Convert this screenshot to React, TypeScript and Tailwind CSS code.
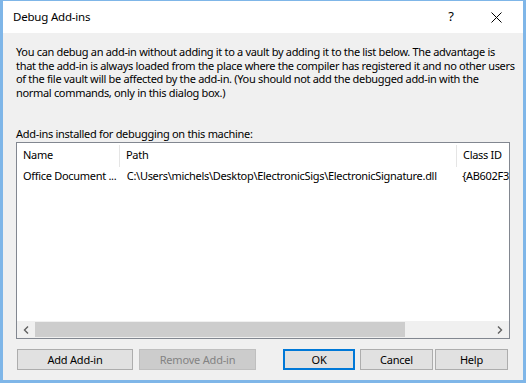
import { FC } from 'react';

const lines = [
    'You can debug an add-in without adding it to a vault by adding it to the list below. The advantage is',
    'that the add-in is always loaded from the place where the compiler has registered it and no other users',
    'of the file vault will be affected by the add-in. (You should not add the debugged add-in with the',
    'normal commands, only in this dialog box.)',
];

const Button: FC<{ label: string; className?: string }> = ({ label, className }) => (
    <button className={`h-[21px] flex items-center justify-center text-[11px] tracking-[-0.2px] leading-none ${className}`}>{label}</button>
);

const App: FC = () => {
    return (
        <div
            className='w-[526px] h-[383px] flex flex-col border-[3px] border-t border-[#7fb6e8] bg-[#f0f0f0] text-black overflow-hidden'
            style={{ fontFamily: '"Noto Sans", "Open Sans", sans-serif' }}
        >
            {/* title bar */}
            <div className='h-[32px] bg-white flex items-center pl-[10px] shrink-0'>
                <span className='text-[11.5px] tracking-[-0.2px] flex-1'>Debug Add-ins</span>
                <span className='text-[13px] w-[20px] text-center mr-[30px]'>?</span>
                <svg width='11' height='11' viewBox='0 0 11 11' className='mr-[21px]'>
                    <path d='M0.5 0.5 L10.5 10.5 M10.5 0.5 L0.5 10.5' stroke='#000' strokeWidth='1' />
                </svg>
            </div>

            <div className='flex-1 flex flex-col pl-[13px] pr-[14px] pt-[12px]'>
                <div className='text-[11px] tracking-[-0.32px] leading-[13.5px]'>
                    {lines.map((l, i) => (
                        <div key={i} className='whitespace-nowrap'>{l}</div>
                    ))}
                </div>
                <div className='text-[11px] tracking-[-0.3px] leading-[13px] mt-[28px] whitespace-nowrap'>Add-ins installed for debugging on this machine:</div>

                {/* list view */}
                <div className='mt-[2px] w-[494px] h-[197px] border border-[#828790] bg-white flex flex-col overflow-hidden text-[11px] tracking-[-0.3px]'>
                    <div className='h-[25px] flex items-center shrink-0'>
                        <div className='w-[103px] pl-[6px] h-[22px] flex items-center border-r border-[#e5e5e5]'>Name</div>
                        <div className='w-[337px] pl-[6px] h-[22px] flex items-center border-r border-[#e5e5e5]'>Path</div>
                        <div className='pl-[6px] whitespace-nowrap'>Class ID</div>
                    </div>
                    <div className='h-[17px] flex items-center shrink-0 whitespace-nowrap'>
                        <div className='w-[103px] pl-[6px] overflow-hidden'>Office Document ...</div>
                        <div className='w-[337px] pl-[7px] overflow-hidden'>C:\Users\michels\Desktop\ElectronicSigs\ElectronicSignature.dll</div>
                        <div className='pl-[6px]'>{'{AB602F3'}</div>
                    </div>
                    <div className='flex-1' />
                    {/* horizontal scrollbar */}
                    <div className='h-[17px] bg-[#f0f0f0] flex items-center shrink-0'>
                        <div className='w-[18px] h-full flex items-center justify-center'>
                            <svg width='6' height='8' viewBox='0 0 6 8'>
                                <path d='M5 0.5 L1.5 4 L5 7.5' stroke='#606060' strokeWidth='1.4' fill='none' />
                            </svg>
                        </div>
                        <div className='w-[370px] h-[15px] bg-[#cdcdcd]' />
                        <div className='flex-1' />
                        <div className='w-[18px] h-full flex items-center justify-center'>
                            <svg width='6' height='8' viewBox='0 0 6 8'>
                                <path d='M1 0.5 L4.5 4 L1 7.5' stroke='#606060' strokeWidth='1.4' fill='none' />
                            </svg>
                        </div>
                    </div>
                </div>

                {/* buttons */}
                <div className='mt-[10px] flex items-center'>
                    <Button label='Add Add-in' className='w-[116px] ml-[1px] bg-[#e1e1e1] border border-[#adadad]' />
                    <Button label='Remove Add-in' className='w-[117px] ml-[6px] bg-[#cccccc] border border-[#bfbfbf] text-[#838383]' />
                    <Button label='OK' className='w-[72px] ml-[27px] bg-[#e1e1e1] border-2 border-[#0078d7]' />
                    <Button label='Cancel' className='w-[73px] ml-[5px] bg-[#e1e1e1] border border-[#adadad]' />
                    <Button label='Help' className='w-[73px] ml-[2px] bg-[#e1e1e1] border border-[#adadad]' />
                </div>
            </div>
        </div>
    );
};

export default App;
